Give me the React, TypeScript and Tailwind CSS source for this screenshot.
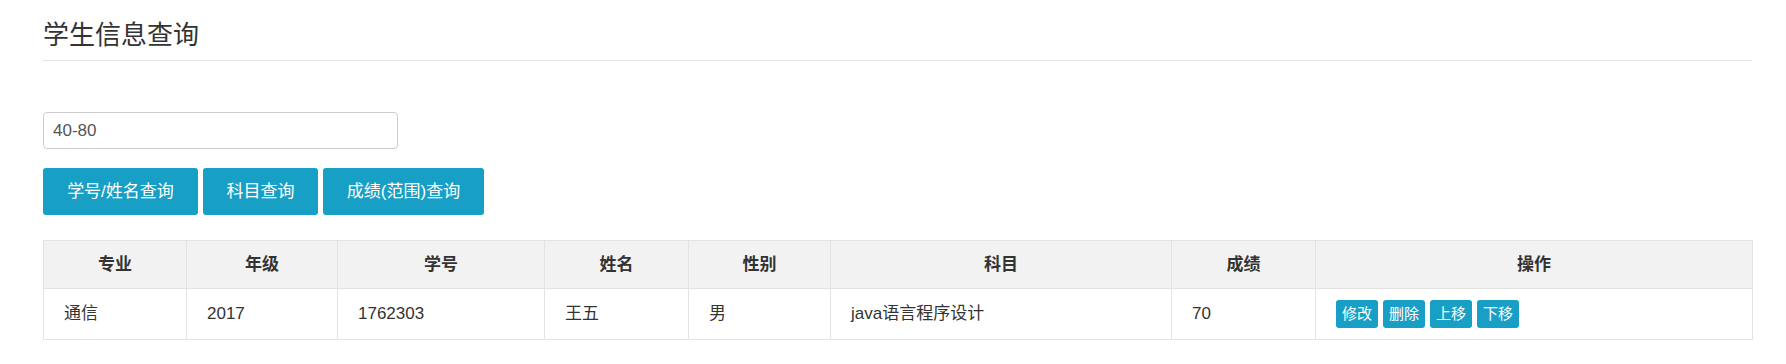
import React from "react";

type Row = {
  major: string;
  grade: string;
  id: string;
  name: string;
  gender: string;
  subject: string;
  score: string;
};

const columns = [
  { label: "专业", w: "w-[143px]" },
  { label: "年级", w: "w-[151px]" },
  { label: "学号", w: "w-[207px]" },
  { label: "姓名", w: "w-[144px]" },
  { label: "性别", w: "w-[142px]" },
  { label: "科目", w: "w-[341px]" },
  { label: "成绩", w: "w-[144px]" },
  { label: "操作", w: "w-[437px]" },
];

const rows: Row[] = [
  {
    major: "通信",
    grade: "2017",
    id: "1762303",
    name: "王五",
    gender: "男",
    subject: "java语言程序设计",
    score: "70",
  },
];

const font = { fontFamily: '"Liberation Sans", "Noto Sans CJK SC", Arial, sans-serif' };

export default function App() {
  const [query, setQuery] = React.useState("40-80");

  return (
    <div className="min-h-[364px] bg-white text-[#333] pl-[43px] pr-[34px]" style={font}>
      <div className="pt-[20px] pb-[10px] border-b border-[#e5e5e5]">
        <h1 className="text-[26px] leading-[30px] font-normal">学生信息查询</h1>
      </div>

      <div className="mt-[51px]">
        <input
          className="w-[355px] h-[37px] px-[9px] text-[17px] text-[#555] border border-[#ccc] rounded-[4px] outline-none"
          value={query}
          onChange={(e) => setQuery(e.target.value)}
        />
      </div>

      <div className="mt-[19px] flex gap-[5px]">
        <button className="h-[47px] w-[155px] bg-[#189fc5] text-white text-[17px] rounded-[3px]">
          学号/姓名查询
        </button>
        <button className="h-[47px] w-[115px] bg-[#189fc5] text-white text-[17px] rounded-[3px]">
          科目查询
        </button>
        <button className="h-[47px] w-[161px] bg-[#189fc5] text-white text-[17px] rounded-[3px]">
          成绩(范围)查询
        </button>
      </div>

      <table className="mt-[25px] w-[1709px] table-fixed border-collapse text-[17px]">
        <thead>
          <tr className="bg-[#f2f2f2]">
            {columns.map((c) => (
              <th
                key={c.label}
                className={`${c.w} h-[48px] border border-[#e3e3e3] text-center font-bold p-0`}
              >
                {c.label}
              </th>
            ))}
          </tr>
        </thead>
        <tbody>
          {rows.map((r) => (
            <tr key={r.id}>
              <td className="h-[51px] border border-[#e3e3e3] pl-[20px]">{r.major}</td>
              <td className="h-[51px] border border-[#e3e3e3] pl-[20px]">{r.grade}</td>
              <td className="h-[51px] border border-[#e3e3e3] pl-[20px]">{r.id}</td>
              <td className="h-[51px] border border-[#e3e3e3] pl-[20px]">{r.name}</td>
              <td className="h-[51px] border border-[#e3e3e3] pl-[20px]">{r.gender}</td>
              <td className="h-[51px] border border-[#e3e3e3] pl-[20px]">{r.subject}</td>
              <td className="h-[51px] border border-[#e3e3e3] pl-[20px]">{r.score}</td>
              <td className="h-[51px] border border-[#e3e3e3] pl-[20px]">
                <div className="flex gap-[5px]">
                  {["修改", "删除", "上移", "下移"].map((b) => (
                    <button
                      key={b}
                      className="h-[28px] px-[6px] bg-[#189fc5] text-white text-[15px] leading-[28px] rounded-[3px]"
                    >
                      {b}
                    </button>
                  ))}
                </div>
              </td>
            </tr>
          ))}
        </tbody>
      </table>
    </div>
  );
}
